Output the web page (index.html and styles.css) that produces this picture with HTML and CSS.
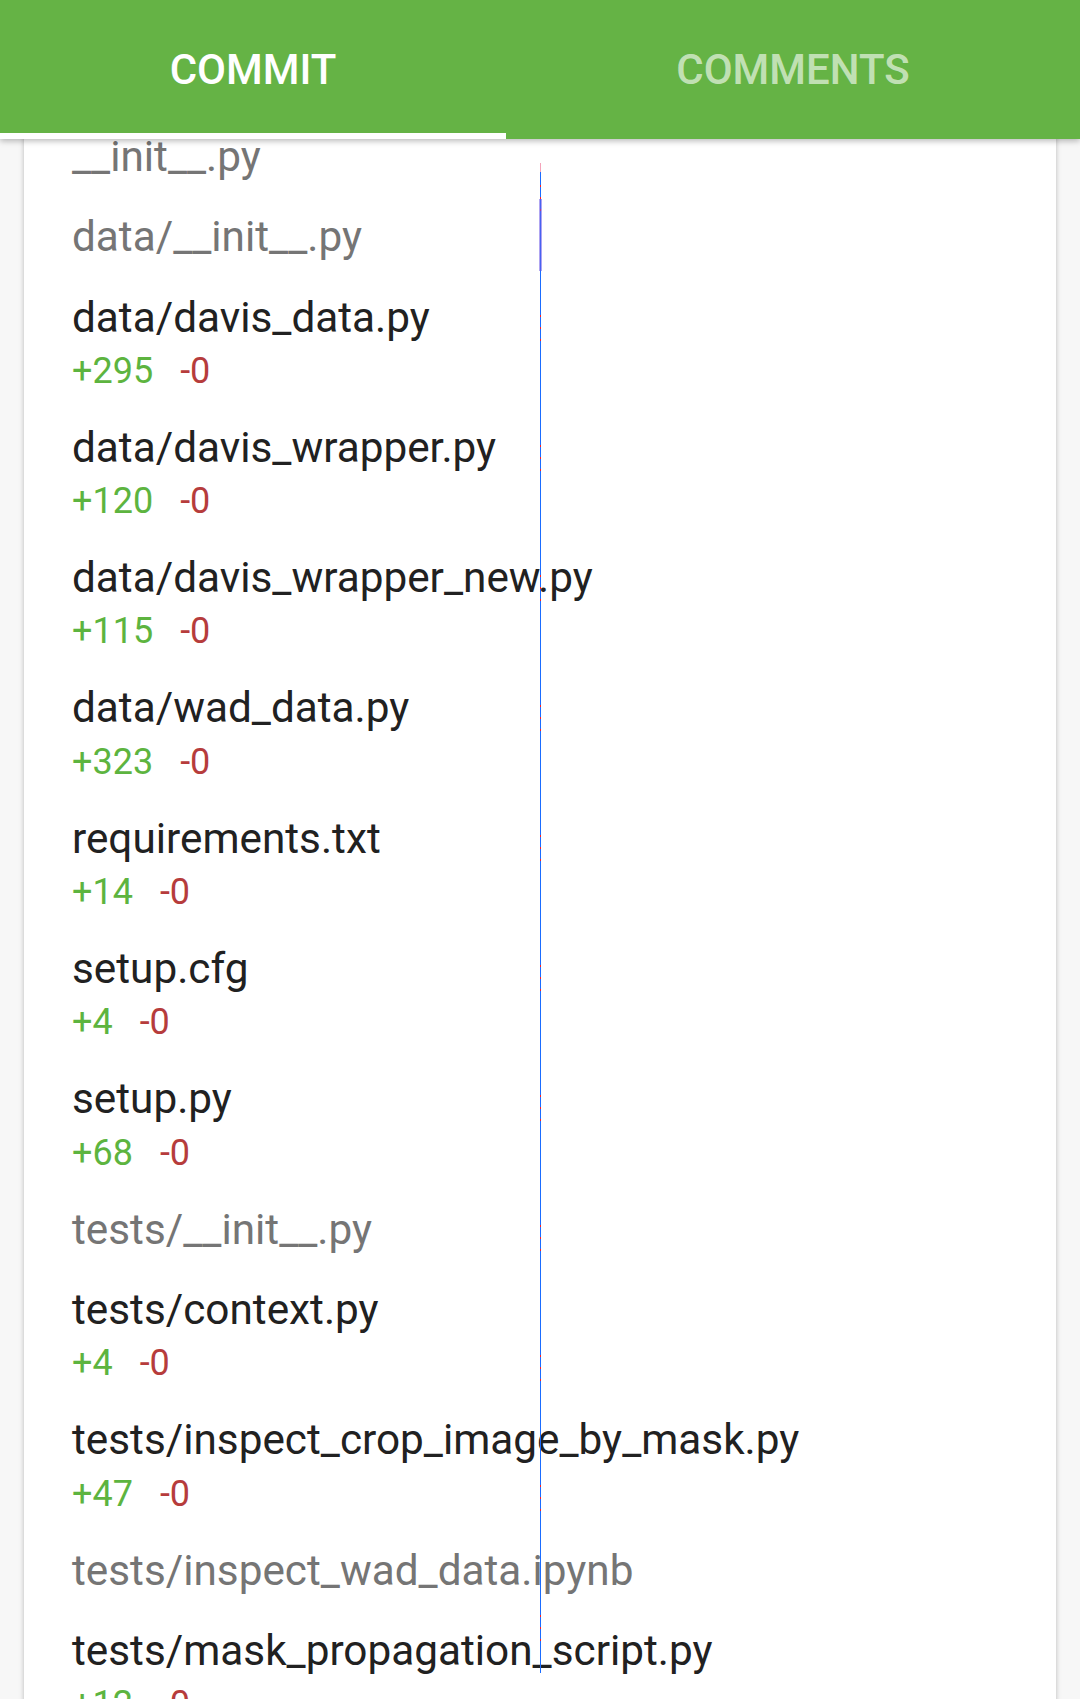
FILE: index.html
```html
<!DOCTYPE html>
<html>
<head>
<meta charset="utf-8">
<link rel="stylesheet" href="styles.css">
</head>
<body>
<header class="tabs">
  <div class="tab tab-commit active">COMMIT</div>
  <div class="tab tab-comments">COMMENTS</div>
</header>
<main class="scroller">
  <section class="card">
    <div class="file"><div class="name muted">__init__.py</div></div>
    <div class="file"><div class="name muted">data/__init__.py</div></div>
    <div class="file"><div class="name">data/davis_data.py</div><div class="stats"><span class="add">+295</span><span class="del">-0</span></div></div>
    <div class="file"><div class="name">data/davis_wrapper.py</div><div class="stats"><span class="add">+120</span><span class="del">-0</span></div></div>
    <div class="file"><div class="name">data/davis_wrapper_new.py</div><div class="stats"><span class="add">+115</span><span class="del">-0</span></div></div>
    <div class="file"><div class="name">data/wad_data.py</div><div class="stats"><span class="add">+323</span><span class="del">-0</span></div></div>
    <div class="file"><div class="name">requirements.txt</div><div class="stats"><span class="add">+14</span><span class="del">-0</span></div></div>
    <div class="file"><div class="name">setup.cfg</div><div class="stats"><span class="add">+4</span><span class="del">-0</span></div></div>
    <div class="file"><div class="name">setup.py</div><div class="stats"><span class="add">+68</span><span class="del">-0</span></div></div>
    <div class="file"><div class="name muted">tests/__init__.py</div></div>
    <div class="file"><div class="name">tests/context.py</div><div class="stats"><span class="add">+4</span><span class="del">-0</span></div></div>
    <div class="file"><div class="name">tests/inspect_crop_image_by_mask.py</div><div class="stats"><span class="add">+47</span><span class="del">-0</span></div></div>
    <div class="file"><div class="name muted">tests/inspect_wad_data.ipynb</div></div>
    <div class="file"><div class="name">tests/mask_propagation_script.py</div><div class="stats"><span class="add">+12</span><span class="del">-0</span></div></div>
  </section>
</main>
<div class="guide"><div class="guide-top"></div><div class="guide-band"></div></div>
</body>
</html>
```

FILE: styles.css
```css
html, body {
  margin: 0;
  padding: 0;
}
body {
  width: 1080px;
  height: 1699px;
  overflow: hidden;
  background: #f7f7f7;
  font-family: Roboto, "Noto Sans", "Liberation Sans", sans-serif;
  position: relative;
}
.tabs {
  display: flex;
  height: 139px;
  background: #65b345;
  position: relative;
  z-index: 2;
  box-shadow: 0 2px 6px rgba(0, 0, 0, 0.28);
}
.tab {
  display: flex;
  align-items: center;
  justify-content: center;
  font-size: 42px;
  font-weight: 500;
  color: rgba(255, 255, 255, 0.62);
}
.tab-commit {
  flex: 0 0 506px;
}
.tab-comments {
  flex: 1 1 auto;
}
.tab.active {
  color: #ffffff;
  box-shadow: inset 0 -6px 0 #ffffff;
}
.scroller {
  height: 1560px;
  overflow: hidden;
  padding: 0 24px;
}
.card {
  margin-top: -22px;
  background: #ffffff;
  box-shadow: 0 1px 5px rgba(0, 0, 0, 0.25);
  padding: 0 48px 40px;
}
.file {
  padding: 12px 0;
}
.name {
  font-size: 42.3px;
  line-height: 56.3px;
  color: #212121;
  white-space: nowrap;
}
.name.muted {
  color: #757575;
}
.stats {
  font-size: 36px;
  line-height: 50px;
  display: flex;
  gap: 27px;
}
.add {
  color: #5db43f;
}
.del {
  color: #b63c3c;
}
.guide {
  position: absolute;
  left: 540px;
  top: 163px;
  width: 1px;
  height: 1510px;
  background-image: repeating-linear-gradient(to bottom, transparent 0, transparent 22px, #ff2020 22px, #ff2020 24px, transparent 24px, transparent 34px, #ff2020 34px, #ff2020 36px, transparent 36px, transparent 46px, #ff2020 46px, #ff2020 48px, transparent 48px, transparent 130px);
  background-color: #1a6cff;
  z-index: 3;
}
.guide-top {
  height: 9px;
  background: #f4a3ba;
}
.guide-band {
  margin-top: 27px;
  margin-left: -1px;
  width: 3px;
  height: 72px;
  background: rgba(110, 90, 230, 0.55);
}
```
